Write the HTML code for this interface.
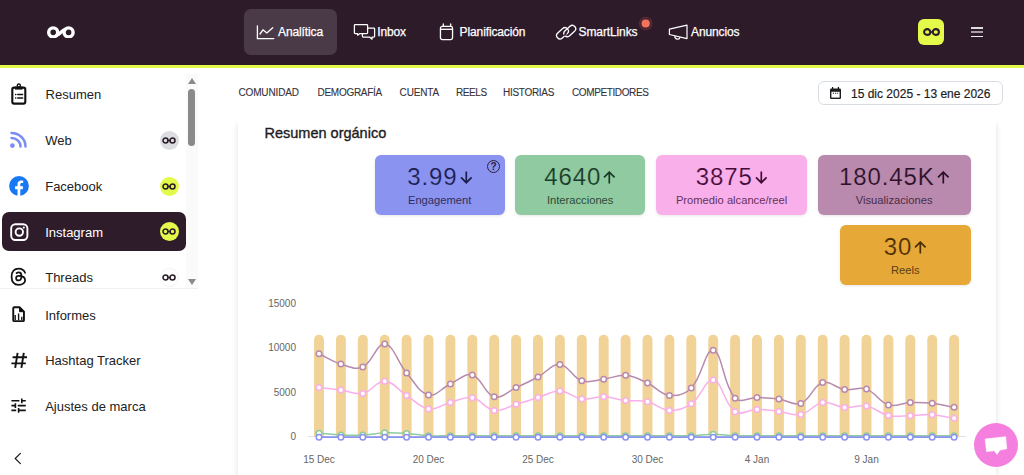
<!DOCTYPE html>
<html><head><meta charset="utf-8">
<style>
*{box-sizing:border-box;margin:0;padding:0}
html,body{width:1024px;height:475px;overflow:hidden;background:#fff;font-family:"Liberation Sans",sans-serif;color:#1d1d1f}
.abs{position:absolute}
</style></head><body>
<div class="abs" style="left:0;top:0;width:1024px;height:65px;background:#2e1b2a"></div>
<div class="abs" style="left:0;top:65px;width:1024px;height:3.3px;background:#e3fa4b"></div>
<svg style="position:absolute;left:46.8px;top:25.6px" width="28.60" height="12.80" viewBox="0 0 28.6 12.8"><circle cx="6.2" cy="6.4" r="4.5" fill="none" stroke="#ffffff" stroke-width="3.4"/><circle cx="21.6" cy="6.4" r="4.5" fill="none" stroke="#ffffff" stroke-width="3.4"/><path d="M8.8 9.8 L11.5 8.4 L16.3 4.4 L19 3" fill="none" stroke="#ffffff" stroke-width="3.4"/></svg>
<div class="abs" style="left:244px;top:9px;width:93px;height:46px;border-radius:7px;background:#4a3a47"></div>
<svg class="abs" style="left:256px;top:24px" width="19" height="16" viewBox="0 0 19 16"><path d="M1.4 1.9V14.6H17.8" fill="none" stroke="#fff" stroke-width="1.3" stroke-linecap="round"/><path d="M4 10 L7 5.8 L10.8 8.9 L16.7 3.8" fill="none" stroke="#fff" stroke-width="1.3" stroke-linecap="round" stroke-linejoin="round"/></svg>
<div style="position:absolute;top:23.84px;font-size:12px;line-height:16px;white-space:nowrap;left:278px;color:#fff;letter-spacing:-0.12px;-webkit-text-stroke:0.25px #fff">Analítica</div>
<svg class="abs" style="left:353px;top:23px" width="23" height="18" viewBox="0 0 23 18"><path d="M2.2 1.5H13.8A0.8 0.8 0 0 1 14.6 2.3V9.7A0.8 0.8 0 0 1 13.8 10.5H7L4.6 12.2V10.5H2.2A0.8 0.8 0 0 1 1.4 9.7V2.3A0.8 0.8 0 0 1 2.2 1.5Z" fill="none" stroke="#fff" stroke-width="1.25" stroke-linejoin="round"/><path d="M14.6 5H20.8A0.8 0.8 0 0 1 21.6 5.8V13.3A0.8 0.8 0 0 1 20.8 14.1H19V16.2L16.5 14.1H10.2A0.8 0.8 0 0 1 9.4 13.3V10.5" fill="none" stroke="#fff" stroke-width="1.25" stroke-linejoin="round"/></svg>
<div style="position:absolute;top:23.84px;font-size:12px;line-height:16px;white-space:nowrap;left:377.2px;color:#fff;letter-spacing:-0.12px;-webkit-text-stroke:0.25px #fff">Inbox</div>
<svg class="abs" style="left:439px;top:23px" width="17" height="18" viewBox="0 0 17 18"><rect x="1.45" y="3.45" width="12.1" height="13.1" rx="1.8" fill="none" stroke="#fff" stroke-width="1.3"/><path d="M1.6 6.3H13.4" stroke="#fff" stroke-width="1.3"/><path d="M4.3 0.9V3.2M11.7 0.9V3.2" stroke="#fff" stroke-width="1.3" stroke-linecap="round"/></svg>
<div style="position:absolute;top:23.84px;font-size:12px;line-height:16px;white-space:nowrap;left:459.6px;color:#fff;letter-spacing:-0.12px;-webkit-text-stroke:0.25px #fff">Planificación</div>
<svg class="abs" style="left:553px;top:22px" width="26" height="20" viewBox="0 0 26 20"><rect x="2.8" y="7.9" width="13.4" height="6.8" rx="3.4" transform="rotate(-42 9.5 11.3)" fill="none" stroke="#fff" stroke-width="1.3"/><rect x="10.1" y="5.6" width="13.4" height="6.8" rx="3.4" transform="rotate(-42 16.8 9)" fill="none" stroke="#fff" stroke-width="1.3"/><path d="M11.2 13.6L13.4 11.4" stroke="#2f1c2b" stroke-width="1.6"/><path d="M11.2 13.6L13.2 11.6" stroke="#fff" stroke-width="1.3" opacity="0"/></svg>
<div style="position:absolute;top:23.84px;font-size:12px;line-height:16px;white-space:nowrap;left:578.6px;color:#fff;letter-spacing:-0.12px;-webkit-text-stroke:0.25px #fff">SmartLinks</div>
<svg class="abs" style="left:636px;top:14px" width="20" height="20" viewBox="0 0 20 20"><circle cx="9.7" cy="9.5" r="6.8" fill="#5a2a35"/><circle cx="9.7" cy="9.5" r="5.6" fill="#4a2431"/><circle cx="9.7" cy="9.5" r="4.1" fill="#f4735c"/></svg>
<svg class="abs" style="left:664px;top:20px" width="30" height="24" viewBox="0 0 30 24"><path d="M5.4 9.2V14.5L23 18.6V5.1Z" fill="none" stroke="#fff" stroke-width="1.2" stroke-linejoin="round"/><path d="M11 15.9A2.6 2.6 0 0 0 16.1 17.1" fill="none" stroke="#fff" stroke-width="1.2"/></svg>
<div style="position:absolute;top:23.84px;font-size:12px;line-height:16px;white-space:nowrap;left:691px;color:#fff;letter-spacing:-0.12px;-webkit-text-stroke:0.25px #fff">Anuncios</div>
<div class="abs" style="left:918.4px;top:19.2px;width:25.7px;height:25.6px;border-radius:6px;background:#e3fa4b"></div>
<svg class="abs" style="left:922.5px;top:28px" width="17" height="8" viewBox="0 0 17 8"><ellipse cx="4.2" cy="4" rx="3.1" ry="2.9" fill="none" stroke="#2f1c2b" stroke-width="2.1"/><ellipse cx="12.8" cy="4" rx="3.1" ry="2.9" fill="none" stroke="#2f1c2b" stroke-width="2.1"/><path d="M7 4H10" stroke="#2f1c2b" stroke-width="1.6"/></svg>
<div class="abs" style="left:971px;top:27px;width:12px;height:1.5px;background:#dcdcdc"></div>
<div class="abs" style="left:971px;top:31.4px;width:12px;height:1.5px;background:#a49fa3"></div>
<div class="abs" style="left:971px;top:35.8px;width:12px;height:1.5px;background:#f0f0f0"></div>

<!-- sidebar -->
<div class="abs" style="left:186px;top:74px;width:12px;height:214px;background:#fafafa"></div>
<div class="abs" style="left:188.3px;top:89.2px;width:7px;height:57.3px;border-radius:3.5px;background:#8a8a8a"></div>
<svg class="abs" style="left:188px;top:78px" width="8" height="6"><path d="M0 6L4 0L8 6Z" fill="#8a8a8a"/></svg>
<svg class="abs" style="left:188px;top:279px" width="8" height="6"><path d="M0 0L4 6L8 0Z" fill="#8a8a8a"/></svg>
<div class="abs" style="left:0;top:288px;width:198px;height:1px;background:#edf0f3"></div>
<div class="abs" style="left:2px;top:212px;width:184px;height:39px;border-radius:7px;background:#2f1c2b"></div>

<svg class="abs" style="left:10px;top:83px" width="17" height="22" viewBox="0 0 17 22"><rect x="2.3" y="4.6" width="13" height="16" rx="1.8" fill="none" stroke="#111" stroke-width="2.1"/><path d="M5 3.6H12.6V6.6H5Z" fill="#111"/><circle cx="8.8" cy="2.6" r="1.6" fill="none" stroke="#111" stroke-width="1.3"/><path d="M5.6 11.6H5.8M5.6 15H5.8M7.8 11.6H12.6M7.8 15H12.6" stroke="#111" stroke-width="1.5" stroke-linecap="round"/></svg>
<div style="position:absolute;top:85.60px;font-size:13px;line-height:17px;white-space:nowrap;left:45.6px;color:#222">Resumen</div>
<svg class="abs" style="left:4px;top:126px" width="30" height="26" viewBox="0 0 30 26"><circle cx="8.4" cy="19.6" r="2.35" fill="#7b8df4"/><path d="M7.55 7.1A13.95 13.3 0 0 1 21.5 20.4M7.55 12.1A8.95 8.3 0 0 1 16.5 20.4" fill="none" stroke="#7b8df4" stroke-width="2.5" stroke-linecap="round"/></svg>
<div style="position:absolute;top:131.80px;font-size:13px;line-height:17px;white-space:nowrap;left:45.2px;color:#222">Web</div>
<div class="abs" style="left:159.8px;top:130.8px;width:19.2px;height:19.2px;border-radius:10px;background:#dcdde0"></div>
<svg style="position:absolute;left:162.4px;top:137.1px" width="15" height="7" viewBox="0 0 15 7"><circle cx="3.5" cy="3.5" r="2.5" fill="none" stroke="#2a1d28" stroke-width="1.55"/><circle cx="10.5" cy="3.5" r="2.5" fill="none" stroke="#2a1d28" stroke-width="1.55"/><path d="M5.6 3.5H8.4" stroke="#2a1d28" stroke-width="1.3"/></svg>
<svg class="abs" style="left:8.7px;top:175.5px" width="20" height="20" viewBox="0 0 20 20"><circle cx="10" cy="10" r="9.9" fill="#1877f2"/><path d="M11.3 20V13.2H13.7L14.1 10.3H11.3V8.5C11.3 7.7 11.6 7.1 12.8 7.1H14.2V4.6C13.9 4.5 13 4.4 12.1 4.4C10.1 4.4 8.5 5.6 8.5 7.9V10.3H6.1V13.2H8.5V20Z" fill="#fff"/></svg>
<div style="position:absolute;top:177.80px;font-size:13px;line-height:17px;white-space:nowrap;left:45.2px;color:#222">Facebook</div>
<div class="abs" style="left:159.8px;top:176.5px;width:19.2px;height:19.2px;border-radius:10px;background:#e3fa4b"></div>
<svg style="position:absolute;left:162.4px;top:182.8px" width="15" height="7" viewBox="0 0 15 7"><circle cx="3.5" cy="3.5" r="2.5" fill="none" stroke="#2a1d28" stroke-width="1.55"/><circle cx="10.5" cy="3.5" r="2.5" fill="none" stroke="#2a1d28" stroke-width="1.55"/><path d="M5.6 3.5H8.4" stroke="#2a1d28" stroke-width="1.3"/></svg>
<svg class="abs" style="left:9.5px;top:222.5px" width="19" height="18" viewBox="0 0 19 18"><rect x="1.2" y="1.2" width="16.2" height="15.8" rx="4.2" fill="none" stroke="#fff" stroke-width="1.9"/><circle cx="9.3" cy="9.1" r="3.7" fill="none" stroke="#fff" stroke-width="1.9"/><circle cx="13.8" cy="4.6" r="1.05" fill="#fff"/></svg>
<div style="position:absolute;top:223.80px;font-size:13px;line-height:17px;white-space:nowrap;left:45.2px;color:#fff">Instagram</div>
<div class="abs" style="left:159.8px;top:222px;width:19.2px;height:19.2px;border-radius:10px;background:#e3fa4b"></div>
<svg style="position:absolute;left:162.4px;top:228.3px" width="15" height="7" viewBox="0 0 15 7"><circle cx="3.5" cy="3.5" r="2.5" fill="none" stroke="#2a1d28" stroke-width="1.55"/><circle cx="10.5" cy="3.5" r="2.5" fill="none" stroke="#2a1d28" stroke-width="1.55"/><path d="M5.6 3.5H8.4" stroke="#2a1d28" stroke-width="1.3"/></svg>
<svg class="abs" style="left:7.95px;top:266.35px" width="21.6" height="21.6" viewBox="0 0 24 24"><path d="M19 7.5c-1.333 -3 -3.667 -4.5 -7 -4.5c-5 0 -8 2.5 -8 9s3.5 9 8 9s7 -3 7 -5s-1 -5 -7 -5c-2.5 0 -3 1.25 -3 2.5c0 1.5 1 2.5 2.5 2.5c2.5 0 3.5 -1.5 3.5 -5s-2 -4 -3 -4s-1.833 .333 -2.5 1" fill="none" stroke="#111" stroke-width="1.95" stroke-linecap="round" stroke-linejoin="round"/></svg>
<div style="position:absolute;top:269.40px;font-size:13px;line-height:17px;white-space:nowrap;left:45.2px;color:#222">Threads</div>
<div class="abs" style="left:159.8px;top:268px;width:19.4px;height:19.4px;border-radius:10px;background:#fff;border:1px solid #f3f3f3"></div>
<svg style="position:absolute;left:162.4px;top:274.3px" width="15" height="7" viewBox="0 0 15 7"><circle cx="3.5" cy="3.5" r="2.5" fill="none" stroke="#2a1d28" stroke-width="1.55"/><circle cx="10.5" cy="3.5" r="2.5" fill="none" stroke="#2a1d28" stroke-width="1.55"/><path d="M5.6 3.5H8.4" stroke="#2a1d28" stroke-width="1.3"/></svg>

<svg class="abs" style="left:5px;top:300px" width="30" height="30" viewBox="0 0 30 30"><path d="M9.25 7.25H14.5L18.95 11.7V20.15A1 1 0 0 1 17.95 21.15H9.25A1 1 0 0 1 8.25 20.15V8.25A1 1 0 0 1 9.25 7.25Z" fill="none" stroke="#111" stroke-width="1.9" stroke-linejoin="round"/><path d="M14.5 7.25L18.95 11.7H14.5Z" fill="#111" stroke="#111" stroke-width="1" stroke-linejoin="round"/><path d="M10.2 20V14.9M13.6 20V13.4M16.8 20V16.8" stroke="#111" stroke-width="1.35"/></svg>
<div style="position:absolute;top:306.50px;font-size:13px;line-height:17px;white-space:nowrap;left:45.2px;color:#222">Informes</div>
<svg class="abs" style="left:5px;top:345px" width="30" height="30" viewBox="0 0 30 30"><path d="M12.6 7.8L10.2 22.8M18.8 7.8L16.4 22.8M7.6 12.2H22M6.4 18.4H20.8" stroke="#111" stroke-width="1.9"/></svg>
<div style="position:absolute;top:352.20px;font-size:13px;line-height:17px;white-space:nowrap;left:45.2px;color:#222">Hashtag Tracker</div>
<svg class="abs" style="left:8.9px;top:396.3px" width="19.2" height="19.2" viewBox="0 0 24 24"><path d="M3 17v2h6v-2H3zM3 5v2h10V5H3zm10 16v-2h8v-2h-8v-2h-2v6h2zM7 9v2H3v2h4v2h2V9H7zm14 4v-2H11v2h10zm-6-4h2V7h4V5h-4V3h-2v6z" fill="#111"/></svg>
<div style="position:absolute;top:398.20px;font-size:13px;line-height:17px;white-space:nowrap;left:45.2px;color:#222">Ajustes de marca</div>
<svg class="abs" style="left:5px;top:445px" width="30" height="30" viewBox="0 0 30 30"><path d="M15.4 8.3L10.2 13.5L15.4 18.6" fill="none" stroke="#1a1a1a" stroke-width="1.2" stroke-linecap="round"/></svg>

<!-- tabs -->
<div style="position:absolute;top:86.03px;font-size:10px;line-height:13px;white-space:nowrap;left:238.4px;color:#35323a;letter-spacing:-0.12px;-webkit-text-stroke:0.1px #35323a">COMUNIDAD</div>
<div style="position:absolute;top:86.03px;font-size:10px;line-height:13px;white-space:nowrap;left:317.5px;color:#35323a;letter-spacing:-0.28px;-webkit-text-stroke:0.1px #35323a">DEMOGRAFÍA</div>
<div style="position:absolute;top:86.03px;font-size:10px;line-height:13px;white-space:nowrap;left:399.6px;color:#35323a;letter-spacing:-0.17px;-webkit-text-stroke:0.1px #35323a">CUENTA</div>
<div style="position:absolute;top:86.03px;font-size:10px;line-height:13px;white-space:nowrap;left:456px;color:#35323a;letter-spacing:-0.4px;-webkit-text-stroke:0.1px #35323a">REELS</div>
<div style="position:absolute;top:86.03px;font-size:10px;line-height:13px;white-space:nowrap;left:503px;color:#35323a;letter-spacing:-0.3px;-webkit-text-stroke:0.1px #35323a">HISTORIAS</div>
<div style="position:absolute;top:86.03px;font-size:10px;line-height:13px;white-space:nowrap;left:572px;color:#35323a;letter-spacing:-0.39px;-webkit-text-stroke:0.1px #35323a">COMPETIDORES</div>

<div class="abs" style="left:817.9px;top:81.4px;width:185px;height:24px;border:1px solid #d8dde3;border-radius:6px"></div>
<svg class="abs" style="left:828.6px;top:85.7px" width="13" height="14" viewBox="0 0 13 14"><rect x="1" y="2.5" width="11" height="10.5" rx="1.3" fill="#1d1d1f"/><rect x="2.4" y="5.8" width="8.2" height="5.8" fill="#fff"/><path d="M3.6 1V3.5M9.4 1V3.5" stroke="#1d1d1f" stroke-width="1.3"/><path d="M3.8 7.3H5M6 7.3H7.2M8.2 7.3H9.2" stroke="#1d1d1f" stroke-width="1.1"/></svg>
<div style="position:absolute;top:85.84px;font-size:12px;line-height:16px;white-space:nowrap;left:851px;color:#1d1d1f;-webkit-text-stroke:0.2px #1d1d1f">15 dic 2025 - 13 ene 2026</div>

<!-- card -->
<div class="abs" style="left:238.2px;top:118px;width:758.2px;height:400px;background:#fff;box-shadow:0 6px 6px rgba(0,0,0,.13)"></div>
<div style="position:absolute;top:123.98px;font-size:14.5px;line-height:19px;white-space:nowrap;left:264.5px;color:#1d1d1f;-webkit-text-stroke:0.35px #1d1d1f">Resumen orgánico</div>
<div class="abs" style="left:374.5px;top:155.2px;width:130.3px;height:60px;border-radius:6px;background:#8b93f0;box-shadow:0 1px 3px rgba(0,0,0,.1)"></div><div class="abs" style="left:374.5px;top:160.89999999999998px;width:130.3px;height:30px;display:flex;justify-content:center;align-items:center;color:#1c1f4e"><span style="font-size:24px;line-height:30px;letter-spacing:0.9px;position:relative;top:1px;-webkit-text-stroke:0.2px #8b93f0">3.99</span><svg style="margin-left:2px;margin-top:2.6px" width="12.6" height="12.8" viewBox="0 0 12.6 12.8"><path d="M6.3 0.4V11.7M1 6.4L6.3 11.7L11.6 6.4" fill="none" stroke="#1c1f4e" stroke-width="1.7"/></svg></div><div style="position:absolute;top:192.62px;font-size:11.2px;line-height:15px;white-space:nowrap;left:374.5px;width:130.3px;text-align:center;color:#2c2f60">Engagement</div><div class="abs" style="left:515px;top:155.2px;width:130.3px;height:60px;border-radius:6px;background:#8fcaa0;box-shadow:0 1px 3px rgba(0,0,0,.1)"></div><div class="abs" style="left:515px;top:160.89999999999998px;width:130.3px;height:30px;display:flex;justify-content:center;align-items:center;color:#1b3a28"><span style="font-size:24px;line-height:30px;letter-spacing:0.9px;position:relative;top:1px;-webkit-text-stroke:0.2px #8fcaa0">4640</span><svg style="margin-left:2px;margin-top:2.6px" width="12.6" height="12.8" viewBox="0 0 12.6 12.8"><path d="M6.3 12.4V1.1M1 6.4L6.3 1.1L11.6 6.4" fill="none" stroke="#1b3a28" stroke-width="1.7"/></svg></div><div style="position:absolute;top:192.62px;font-size:11.2px;line-height:15px;white-space:nowrap;left:515.0px;width:130.3px;text-align:center;color:#2d4a37">Interacciones</div><div class="abs" style="left:655.8px;top:155.2px;width:151.5px;height:60px;border-radius:6px;background:#f9b0ea;box-shadow:0 1px 3px rgba(0,0,0,.1)"></div><div class="abs" style="left:655.8px;top:160.89999999999998px;width:151.5px;height:30px;display:flex;justify-content:center;align-items:center;color:#420c36"><span style="font-size:24px;line-height:30px;letter-spacing:0.9px;position:relative;top:1px;-webkit-text-stroke:0.2px #f9b0ea">3875</span><svg style="margin-left:2px;margin-top:2.6px" width="12.6" height="12.8" viewBox="0 0 12.6 12.8"><path d="M6.3 0.4V11.7M1 6.4L6.3 11.7L11.6 6.4" fill="none" stroke="#420c36" stroke-width="1.7"/></svg></div><div style="position:absolute;top:192.62px;font-size:11.2px;line-height:15px;white-space:nowrap;left:655.8px;width:151.5px;text-align:center;color:#66305a">Promedio alcance/reel</div><div class="abs" style="left:817.6px;top:155.2px;width:153.1px;height:60px;border-radius:6px;background:#b98aae;box-shadow:0 1px 3px rgba(0,0,0,.1)"></div><div class="abs" style="left:817.6px;top:160.89999999999998px;width:153.1px;height:30px;display:flex;justify-content:center;align-items:center;color:#2c1128"><span style="font-size:24px;line-height:30px;letter-spacing:0.9px;position:relative;top:1px;-webkit-text-stroke:0.2px #b98aae">180.45K</span><svg style="margin-left:2px;margin-top:2.6px" width="12.6" height="12.8" viewBox="0 0 12.6 12.8"><path d="M6.3 12.4V1.1M1 6.4L6.3 1.1L11.6 6.4" fill="none" stroke="#2c1128" stroke-width="1.7"/></svg></div><div style="position:absolute;top:192.62px;font-size:11.2px;line-height:15px;white-space:nowrap;left:817.6px;width:153.1px;text-align:center;color:#4a2c44">Visualizaciones</div><div class="abs" style="left:840px;top:225.2px;width:130.7px;height:60px;border-radius:6px;background:#e6a837;box-shadow:0 1px 3px rgba(0,0,0,.1)"></div><div class="abs" style="left:840px;top:230.89999999999998px;width:130.7px;height:30px;display:flex;justify-content:center;align-items:center;color:#4a2e05"><span style="font-size:24px;line-height:30px;letter-spacing:0.9px;position:relative;top:1px;-webkit-text-stroke:0.2px #e6a837">30</span><svg style="margin-left:2px;margin-top:2.6px" width="12.6" height="12.8" viewBox="0 0 12.6 12.8"><path d="M6.3 12.4V1.1M1 6.4L6.3 1.1L11.6 6.4" fill="none" stroke="#4a2e05" stroke-width="1.7"/></svg></div><div style="position:absolute;top:262.62px;font-size:11.2px;line-height:15px;white-space:nowrap;left:840.0px;width:130.7px;text-align:center;color:#5c3f14">Reels</div><div class="abs" style="left:487px;top:159.6px;width:13.2px;height:13.2px;border:1.1px solid #2a2140;border-radius:7px"></div>
<div style="position:absolute;top:159.84px;font-size:10px;line-height:13px;white-space:nowrap;left:486.5px;width:14px;text-align:center;color:#2a2140;font-weight:bold">?</div>
<div style="position:absolute;top:297.14px;font-size:10px;line-height:13px;white-space:nowrap;left:236px;width:60px;text-align:right;color:#666">15000</div><div style="position:absolute;top:341.44px;font-size:10px;line-height:13px;white-space:nowrap;left:236px;width:60px;text-align:right;color:#666">10000</div><div style="position:absolute;top:385.84px;font-size:10px;line-height:13px;white-space:nowrap;left:236px;width:60px;text-align:right;color:#666">5000</div><div style="position:absolute;top:430.14px;font-size:10px;line-height:13px;white-space:nowrap;left:236px;width:60px;text-align:right;color:#666">0</div>
<div style="position:absolute;top:452.74px;font-size:10px;line-height:13px;white-space:nowrap;left:279.0px;width:80px;text-align:center;color:#666">15 Dec</div><div style="position:absolute;top:452.74px;font-size:10px;line-height:13px;white-space:nowrap;left:388.5px;width:80px;text-align:center;color:#666">20 Dec</div><div style="position:absolute;top:452.74px;font-size:10px;line-height:13px;white-space:nowrap;left:498.0px;width:80px;text-align:center;color:#666">25 Dec</div><div style="position:absolute;top:452.74px;font-size:10px;line-height:13px;white-space:nowrap;left:607.5px;width:80px;text-align:center;color:#666">30 Dec</div><div style="position:absolute;top:452.74px;font-size:10px;line-height:13px;white-space:nowrap;left:717.0px;width:80px;text-align:center;color:#666">4 Jan</div><div style="position:absolute;top:452.74px;font-size:10px;line-height:13px;white-space:nowrap;left:826.5px;width:80px;text-align:center;color:#666">9 Jan</div>
<svg style="position:absolute;left:0;top:0" width="1024" height="475" viewBox="0 0 1024 475">
<line x1="308" y1="436.5" x2="966" y2="436.5" stroke="#e3e3e3" stroke-width="1"/>
<path d="M314.05 436.5V339.65A4.95 4.95 0 0 1 323.95 339.65V436.5Z" fill="#f1d297"/><path d="M335.95 436.5V339.65A4.95 4.95 0 0 1 345.85 339.65V436.5Z" fill="#f1d297"/><path d="M357.85 436.5V339.65A4.95 4.95 0 0 1 367.75 339.65V436.5Z" fill="#f1d297"/><path d="M379.75 436.5V339.65A4.95 4.95 0 0 1 389.65 339.65V436.5Z" fill="#f1d297"/><path d="M401.65 436.5V339.65A4.95 4.95 0 0 1 411.55 339.65V436.5Z" fill="#f1d297"/><path d="M423.55 436.5V339.65A4.95 4.95 0 0 1 433.45 339.65V436.5Z" fill="#f1d297"/><path d="M445.45 436.5V339.65A4.95 4.95 0 0 1 455.35 339.65V436.5Z" fill="#f1d297"/><path d="M467.35 436.5V339.65A4.95 4.95 0 0 1 477.25 339.65V436.5Z" fill="#f1d297"/><path d="M489.25 436.5V339.65A4.95 4.95 0 0 1 499.15 339.65V436.5Z" fill="#f1d297"/><path d="M511.15 436.5V339.65A4.95 4.95 0 0 1 521.05 339.65V436.5Z" fill="#f1d297"/><path d="M533.05 436.5V339.65A4.95 4.95 0 0 1 542.95 339.65V436.5Z" fill="#f1d297"/><path d="M554.95 436.5V339.65A4.95 4.95 0 0 1 564.85 339.65V436.5Z" fill="#f1d297"/><path d="M576.85 436.5V339.65A4.95 4.95 0 0 1 586.75 339.65V436.5Z" fill="#f1d297"/><path d="M598.75 436.5V339.65A4.95 4.95 0 0 1 608.65 339.65V436.5Z" fill="#f1d297"/><path d="M620.65 436.5V339.65A4.95 4.95 0 0 1 630.55 339.65V436.5Z" fill="#f1d297"/><path d="M642.55 436.5V339.65A4.95 4.95 0 0 1 652.45 339.65V436.5Z" fill="#f1d297"/><path d="M664.45 436.5V339.65A4.95 4.95 0 0 1 674.35 339.65V436.5Z" fill="#f1d297"/><path d="M686.35 436.5V339.65A4.95 4.95 0 0 1 696.25 339.65V436.5Z" fill="#f1d297"/><path d="M708.25 436.5V339.65A4.95 4.95 0 0 1 718.15 339.65V436.5Z" fill="#f1d297"/><path d="M730.15 436.5V339.65A4.95 4.95 0 0 1 740.05 339.65V436.5Z" fill="#f1d297"/><path d="M752.05 436.5V339.65A4.95 4.95 0 0 1 761.95 339.65V436.5Z" fill="#f1d297"/><path d="M773.95 436.5V339.65A4.95 4.95 0 0 1 783.85 339.65V436.5Z" fill="#f1d297"/><path d="M795.85 436.5V339.65A4.95 4.95 0 0 1 805.75 339.65V436.5Z" fill="#f1d297"/><path d="M817.75 436.5V339.65A4.95 4.95 0 0 1 827.65 339.65V436.5Z" fill="#f1d297"/><path d="M839.65 436.5V339.65A4.95 4.95 0 0 1 849.55 339.65V436.5Z" fill="#f1d297"/><path d="M861.55 436.5V339.65A4.95 4.95 0 0 1 871.45 339.65V436.5Z" fill="#f1d297"/><path d="M883.45 436.5V339.65A4.95 4.95 0 0 1 893.35 339.65V436.5Z" fill="#f1d297"/><path d="M905.35 436.5V339.65A4.95 4.95 0 0 1 915.25 339.65V436.5Z" fill="#f1d297"/><path d="M927.25 436.5V339.65A4.95 4.95 0 0 1 937.15 339.65V436.5Z" fill="#f1d297"/><path d="M949.15 436.5V339.65A4.95 4.95 0 0 1 959.05 339.65V436.5Z" fill="#f1d297"/>
<path d="M319.0 353.7C327.8 357.9 331.7 361.3 340.9 364.1C349.3 366.6 355.6 370.3 362.8 367.0C373.1 362.3 376.5 342.9 384.7 344.0C394.0 345.3 397.2 361.9 406.6 372.9C414.7 382.3 418.7 392.4 428.5 394.9C436.2 396.9 441.5 388.0 450.4 384.0C459.0 380.1 464.7 372.8 472.3 375.0C482.2 377.9 484.3 394.0 494.2 396.8C501.8 399.0 507.4 391.5 516.1 387.6C525.0 383.6 529.4 381.6 538.0 377.0C546.9 372.3 551.5 363.7 559.9 364.4C569.0 365.2 572.1 377.5 581.8 380.8C589.6 383.4 595.0 380.3 603.7 379.2C612.5 378.1 617.0 374.6 625.6 375.3C634.5 376.1 639.1 379.1 647.5 383.0C656.6 387.2 660.3 394.4 669.4 395.4C677.8 396.3 685.2 394.2 691.3 387.9C702.7 376.1 705.3 348.4 713.2 350.3C722.8 352.6 722.7 384.9 735.1 398.3C740.2 403.9 748.2 397.5 757.0 397.6C765.8 397.7 770.2 397.9 778.9 399.0C787.7 400.2 793.4 406.2 800.8 403.4C810.9 399.6 812.7 385.6 822.7 382.5C830.3 380.1 835.6 388.2 844.6 389.6C853.1 390.9 858.7 386.4 866.5 389.1C876.2 392.5 878.7 401.9 888.4 404.9C896.3 407.3 901.5 402.9 910.3 402.6C919.0 402.3 923.5 402.4 932.2 403.3C941.0 404.2 945.3 405.6 954.1 407.2" fill="none" stroke="#b88aae" stroke-width="1.5"/>
<circle cx="319.0" cy="353.7" r="2.75" fill="#fff" stroke="#b88aae" stroke-width="1.5"/><circle cx="340.9" cy="364.1" r="2.75" fill="#fff" stroke="#b88aae" stroke-width="1.5"/><circle cx="362.8" cy="367.0" r="2.75" fill="#fff" stroke="#b88aae" stroke-width="1.5"/><circle cx="384.7" cy="344.0" r="2.75" fill="#fff" stroke="#b88aae" stroke-width="1.5"/><circle cx="406.6" cy="372.9" r="2.75" fill="#fff" stroke="#b88aae" stroke-width="1.5"/><circle cx="428.5" cy="394.9" r="2.75" fill="#fff" stroke="#b88aae" stroke-width="1.5"/><circle cx="450.4" cy="384.0" r="2.75" fill="#fff" stroke="#b88aae" stroke-width="1.5"/><circle cx="472.3" cy="375.0" r="2.75" fill="#fff" stroke="#b88aae" stroke-width="1.5"/><circle cx="494.2" cy="396.8" r="2.75" fill="#fff" stroke="#b88aae" stroke-width="1.5"/><circle cx="516.1" cy="387.6" r="2.75" fill="#fff" stroke="#b88aae" stroke-width="1.5"/><circle cx="538.0" cy="377.0" r="2.75" fill="#fff" stroke="#b88aae" stroke-width="1.5"/><circle cx="559.9" cy="364.4" r="2.75" fill="#fff" stroke="#b88aae" stroke-width="1.5"/><circle cx="581.8" cy="380.8" r="2.75" fill="#fff" stroke="#b88aae" stroke-width="1.5"/><circle cx="603.7" cy="379.2" r="2.75" fill="#fff" stroke="#b88aae" stroke-width="1.5"/><circle cx="625.6" cy="375.3" r="2.75" fill="#fff" stroke="#b88aae" stroke-width="1.5"/><circle cx="647.5" cy="383.0" r="2.75" fill="#fff" stroke="#b88aae" stroke-width="1.5"/><circle cx="669.4" cy="395.4" r="2.75" fill="#fff" stroke="#b88aae" stroke-width="1.5"/><circle cx="691.3" cy="387.9" r="2.75" fill="#fff" stroke="#b88aae" stroke-width="1.5"/><circle cx="713.2" cy="350.3" r="2.75" fill="#fff" stroke="#b88aae" stroke-width="1.5"/><circle cx="735.1" cy="398.3" r="2.75" fill="#fff" stroke="#b88aae" stroke-width="1.5"/><circle cx="757.0" cy="397.6" r="2.75" fill="#fff" stroke="#b88aae" stroke-width="1.5"/><circle cx="778.9" cy="399.0" r="2.75" fill="#fff" stroke="#b88aae" stroke-width="1.5"/><circle cx="800.8" cy="403.4" r="2.75" fill="#fff" stroke="#b88aae" stroke-width="1.5"/><circle cx="822.7" cy="382.5" r="2.75" fill="#fff" stroke="#b88aae" stroke-width="1.5"/><circle cx="844.6" cy="389.6" r="2.75" fill="#fff" stroke="#b88aae" stroke-width="1.5"/><circle cx="866.5" cy="389.1" r="2.75" fill="#fff" stroke="#b88aae" stroke-width="1.5"/><circle cx="888.4" cy="404.9" r="2.75" fill="#fff" stroke="#b88aae" stroke-width="1.5"/><circle cx="910.3" cy="402.6" r="2.75" fill="#fff" stroke="#b88aae" stroke-width="1.5"/><circle cx="932.2" cy="403.3" r="2.75" fill="#fff" stroke="#b88aae" stroke-width="1.5"/><circle cx="954.1" cy="407.2" r="2.75" fill="#fff" stroke="#b88aae" stroke-width="1.5"/>
<path d="M319.0 387.6C327.8 388.6 332.2 388.8 340.9 390.0C349.7 391.2 354.6 395.0 362.8 393.4C372.1 391.6 376.1 380.9 384.7 381.3C393.6 381.7 397.8 389.8 406.6 395.4C415.3 400.9 419.2 407.4 428.5 408.9C436.7 410.2 441.5 404.6 450.4 402.4C459.1 400.2 464.1 396.3 472.3 397.8C481.6 399.5 485.0 409.0 494.2 410.4C502.5 411.6 507.4 406.9 516.1 404.3C524.9 401.7 529.2 400.3 538.0 397.6C546.8 394.9 551.2 390.7 559.9 391.0C568.7 391.3 572.8 397.8 581.8 399.0C590.3 400.1 595.0 396.5 603.7 396.8C612.5 397.1 616.8 399.5 625.6 400.5C634.3 401.5 639.1 399.8 647.5 401.7C656.6 403.8 660.5 410.0 669.4 410.4C678.0 410.8 684.0 408.8 691.3 403.8C701.6 396.7 705.2 378.6 713.2 380.1C722.7 381.8 724.0 404.3 735.1 411.8C741.5 416.1 748.2 409.5 757.0 409.4C765.8 409.3 770.2 410.4 778.9 411.4C787.7 412.4 792.6 416.2 800.8 414.5C810.1 412.6 813.5 404.1 822.7 402.6C831.0 401.3 835.7 406.8 844.6 407.5C853.3 408.2 858.1 404.5 866.5 406.0C875.6 407.7 879.3 413.5 888.4 415.5C896.8 417.4 901.5 415.9 910.3 415.7C919.1 415.5 923.5 414.2 932.2 414.7C941.0 415.2 945.3 416.9 954.1 418.3" fill="none" stroke="#f9b0ea" stroke-width="1.5"/>
<circle cx="319.0" cy="387.6" r="2.75" fill="#fff" stroke="#f9b0ea" stroke-width="1.5"/><circle cx="340.9" cy="390.0" r="2.75" fill="#fff" stroke="#f9b0ea" stroke-width="1.5"/><circle cx="362.8" cy="393.4" r="2.75" fill="#fff" stroke="#f9b0ea" stroke-width="1.5"/><circle cx="384.7" cy="381.3" r="2.75" fill="#fff" stroke="#f9b0ea" stroke-width="1.5"/><circle cx="406.6" cy="395.4" r="2.75" fill="#fff" stroke="#f9b0ea" stroke-width="1.5"/><circle cx="428.5" cy="408.9" r="2.75" fill="#fff" stroke="#f9b0ea" stroke-width="1.5"/><circle cx="450.4" cy="402.4" r="2.75" fill="#fff" stroke="#f9b0ea" stroke-width="1.5"/><circle cx="472.3" cy="397.8" r="2.75" fill="#fff" stroke="#f9b0ea" stroke-width="1.5"/><circle cx="494.2" cy="410.4" r="2.75" fill="#fff" stroke="#f9b0ea" stroke-width="1.5"/><circle cx="516.1" cy="404.3" r="2.75" fill="#fff" stroke="#f9b0ea" stroke-width="1.5"/><circle cx="538.0" cy="397.6" r="2.75" fill="#fff" stroke="#f9b0ea" stroke-width="1.5"/><circle cx="559.9" cy="391.0" r="2.75" fill="#fff" stroke="#f9b0ea" stroke-width="1.5"/><circle cx="581.8" cy="399.0" r="2.75" fill="#fff" stroke="#f9b0ea" stroke-width="1.5"/><circle cx="603.7" cy="396.8" r="2.75" fill="#fff" stroke="#f9b0ea" stroke-width="1.5"/><circle cx="625.6" cy="400.5" r="2.75" fill="#fff" stroke="#f9b0ea" stroke-width="1.5"/><circle cx="647.5" cy="401.7" r="2.75" fill="#fff" stroke="#f9b0ea" stroke-width="1.5"/><circle cx="669.4" cy="410.4" r="2.75" fill="#fff" stroke="#f9b0ea" stroke-width="1.5"/><circle cx="691.3" cy="403.8" r="2.75" fill="#fff" stroke="#f9b0ea" stroke-width="1.5"/><circle cx="713.2" cy="380.1" r="2.75" fill="#fff" stroke="#f9b0ea" stroke-width="1.5"/><circle cx="735.1" cy="411.8" r="2.75" fill="#fff" stroke="#f9b0ea" stroke-width="1.5"/><circle cx="757.0" cy="409.4" r="2.75" fill="#fff" stroke="#f9b0ea" stroke-width="1.5"/><circle cx="778.9" cy="411.4" r="2.75" fill="#fff" stroke="#f9b0ea" stroke-width="1.5"/><circle cx="800.8" cy="414.5" r="2.75" fill="#fff" stroke="#f9b0ea" stroke-width="1.5"/><circle cx="822.7" cy="402.6" r="2.75" fill="#fff" stroke="#f9b0ea" stroke-width="1.5"/><circle cx="844.6" cy="407.5" r="2.75" fill="#fff" stroke="#f9b0ea" stroke-width="1.5"/><circle cx="866.5" cy="406.0" r="2.75" fill="#fff" stroke="#f9b0ea" stroke-width="1.5"/><circle cx="888.4" cy="415.5" r="2.75" fill="#fff" stroke="#f9b0ea" stroke-width="1.5"/><circle cx="910.3" cy="415.7" r="2.75" fill="#fff" stroke="#f9b0ea" stroke-width="1.5"/><circle cx="932.2" cy="414.7" r="2.75" fill="#fff" stroke="#f9b0ea" stroke-width="1.5"/><circle cx="954.1" cy="418.3" r="2.75" fill="#fff" stroke="#f9b0ea" stroke-width="1.5"/>
<path d="M319.0 433.2C327.8 433.9 332.1 434.5 340.9 434.9C349.6 435.3 354.1 435.5 362.8 435.1C371.6 434.7 375.9 433.0 384.7 432.7C393.4 432.4 397.9 432.8 406.6 433.4C415.4 434.0 419.7 435.2 428.5 435.7C437.2 436.2 441.6 435.7 450.4 435.7C459.2 435.7 463.5 435.7 472.3 435.7C481.1 435.7 485.4 435.7 494.2 435.7C503.0 435.7 507.3 435.7 516.1 435.7C524.9 435.7 529.2 435.7 538.0 435.7C546.8 435.7 551.1 435.7 559.9 435.7C568.7 435.7 573.0 435.7 581.8 435.7C590.6 435.7 594.9 435.7 603.7 435.7C612.5 435.7 616.8 435.7 625.6 435.7C634.4 435.7 638.7 435.7 647.5 435.7C656.3 435.7 660.6 435.7 669.4 435.7C678.2 435.7 682.5 436.0 691.3 435.7C700.1 435.4 704.4 434.3 713.2 434.3C722.0 434.3 726.3 435.4 735.1 435.7C743.9 436.0 748.2 435.7 757.0 435.7C765.8 435.7 770.1 435.7 778.9 435.7C787.7 435.7 792.0 435.7 800.8 435.7C809.6 435.7 813.9 435.7 822.7 435.7C831.5 435.7 835.8 435.7 844.6 435.7C853.4 435.7 857.7 435.7 866.5 435.7C875.3 435.7 879.6 435.7 888.4 435.7C897.2 435.7 901.5 435.7 910.3 435.7C919.1 435.7 923.4 435.7 932.2 435.7C941.0 435.7 945.3 435.7 954.1 435.7" fill="none" stroke="#8fcaa0" stroke-width="1.5"/>
<circle cx="319.0" cy="433.2" r="2.75" fill="#fff" stroke="#8fcaa0" stroke-width="1.5"/><circle cx="340.9" cy="434.9" r="2.75" fill="#fff" stroke="#8fcaa0" stroke-width="1.5"/><circle cx="362.8" cy="435.1" r="2.75" fill="#fff" stroke="#8fcaa0" stroke-width="1.5"/><circle cx="384.7" cy="432.7" r="2.75" fill="#fff" stroke="#8fcaa0" stroke-width="1.5"/><circle cx="406.6" cy="433.4" r="2.75" fill="#fff" stroke="#8fcaa0" stroke-width="1.5"/><circle cx="428.5" cy="435.7" r="2.75" fill="#fff" stroke="#8fcaa0" stroke-width="1.5"/><circle cx="450.4" cy="435.7" r="2.75" fill="#fff" stroke="#8fcaa0" stroke-width="1.5"/><circle cx="472.3" cy="435.7" r="2.75" fill="#fff" stroke="#8fcaa0" stroke-width="1.5"/><circle cx="494.2" cy="435.7" r="2.75" fill="#fff" stroke="#8fcaa0" stroke-width="1.5"/><circle cx="516.1" cy="435.7" r="2.75" fill="#fff" stroke="#8fcaa0" stroke-width="1.5"/><circle cx="538.0" cy="435.7" r="2.75" fill="#fff" stroke="#8fcaa0" stroke-width="1.5"/><circle cx="559.9" cy="435.7" r="2.75" fill="#fff" stroke="#8fcaa0" stroke-width="1.5"/><circle cx="581.8" cy="435.7" r="2.75" fill="#fff" stroke="#8fcaa0" stroke-width="1.5"/><circle cx="603.7" cy="435.7" r="2.75" fill="#fff" stroke="#8fcaa0" stroke-width="1.5"/><circle cx="625.6" cy="435.7" r="2.75" fill="#fff" stroke="#8fcaa0" stroke-width="1.5"/><circle cx="647.5" cy="435.7" r="2.75" fill="#fff" stroke="#8fcaa0" stroke-width="1.5"/><circle cx="669.4" cy="435.7" r="2.75" fill="#fff" stroke="#8fcaa0" stroke-width="1.5"/><circle cx="691.3" cy="435.7" r="2.75" fill="#fff" stroke="#8fcaa0" stroke-width="1.5"/><circle cx="713.2" cy="434.3" r="2.75" fill="#fff" stroke="#8fcaa0" stroke-width="1.5"/><circle cx="735.1" cy="435.7" r="2.75" fill="#fff" stroke="#8fcaa0" stroke-width="1.5"/><circle cx="757.0" cy="435.7" r="2.75" fill="#fff" stroke="#8fcaa0" stroke-width="1.5"/><circle cx="778.9" cy="435.7" r="2.75" fill="#fff" stroke="#8fcaa0" stroke-width="1.5"/><circle cx="800.8" cy="435.7" r="2.75" fill="#fff" stroke="#8fcaa0" stroke-width="1.5"/><circle cx="822.7" cy="435.7" r="2.75" fill="#fff" stroke="#8fcaa0" stroke-width="1.5"/><circle cx="844.6" cy="435.7" r="2.75" fill="#fff" stroke="#8fcaa0" stroke-width="1.5"/><circle cx="866.5" cy="435.7" r="2.75" fill="#fff" stroke="#8fcaa0" stroke-width="1.5"/><circle cx="888.4" cy="435.7" r="2.75" fill="#fff" stroke="#8fcaa0" stroke-width="1.5"/><circle cx="910.3" cy="435.7" r="2.75" fill="#fff" stroke="#8fcaa0" stroke-width="1.5"/><circle cx="932.2" cy="435.7" r="2.75" fill="#fff" stroke="#8fcaa0" stroke-width="1.5"/><circle cx="954.1" cy="435.7" r="2.75" fill="#fff" stroke="#8fcaa0" stroke-width="1.5"/>
<path d="M319.0 437.2C327.8 437.2 332.1 437.2 340.9 437.2C349.7 437.2 354.0 437.2 362.8 437.2C371.6 437.2 375.9 437.2 384.7 437.2C393.5 437.2 397.8 437.2 406.6 437.2C415.4 437.2 419.7 437.2 428.5 437.2C437.3 437.2 441.6 437.2 450.4 437.2C459.2 437.2 463.5 437.2 472.3 437.2C481.1 437.2 485.4 437.2 494.2 437.2C503.0 437.2 507.3 437.2 516.1 437.2C524.9 437.2 529.2 437.2 538.0 437.2C546.8 437.2 551.1 437.2 559.9 437.2C568.7 437.2 573.0 437.2 581.8 437.2C590.6 437.2 594.9 437.2 603.7 437.2C612.5 437.2 616.8 437.2 625.6 437.2C634.4 437.2 638.7 437.2 647.5 437.2C656.3 437.2 660.6 437.2 669.4 437.2C678.2 437.2 682.5 437.2 691.3 437.2C700.1 437.2 704.4 437.2 713.2 437.2C722.0 437.2 726.3 437.2 735.1 437.2C743.9 437.2 748.2 437.2 757.0 437.2C765.8 437.2 770.1 437.2 778.9 437.2C787.7 437.2 792.0 437.2 800.8 437.2C809.6 437.2 813.9 437.2 822.7 437.2C831.5 437.2 835.8 437.2 844.6 437.2C853.4 437.2 857.7 437.2 866.5 437.2C875.3 437.2 879.6 437.2 888.4 437.2C897.2 437.2 901.5 437.2 910.3 437.2C919.1 437.2 923.4 437.2 932.2 437.2C941.0 437.2 945.3 437.2 954.1 437.2" fill="none" stroke="#8b93f0" stroke-width="1.8"/>
<circle cx="319.0" cy="437.2" r="2.75" fill="#fff" stroke="#8b93f0" stroke-width="1.5"/><circle cx="340.9" cy="437.2" r="2.75" fill="#fff" stroke="#8b93f0" stroke-width="1.5"/><circle cx="362.8" cy="437.2" r="2.75" fill="#fff" stroke="#8b93f0" stroke-width="1.5"/><circle cx="384.7" cy="437.2" r="2.75" fill="#fff" stroke="#8b93f0" stroke-width="1.5"/><circle cx="406.6" cy="437.2" r="2.75" fill="#fff" stroke="#8b93f0" stroke-width="1.5"/><circle cx="428.5" cy="437.2" r="2.75" fill="#fff" stroke="#8b93f0" stroke-width="1.5"/><circle cx="450.4" cy="437.2" r="2.75" fill="#fff" stroke="#8b93f0" stroke-width="1.5"/><circle cx="472.3" cy="437.2" r="2.75" fill="#fff" stroke="#8b93f0" stroke-width="1.5"/><circle cx="494.2" cy="437.2" r="2.75" fill="#fff" stroke="#8b93f0" stroke-width="1.5"/><circle cx="516.1" cy="437.2" r="2.75" fill="#fff" stroke="#8b93f0" stroke-width="1.5"/><circle cx="538.0" cy="437.2" r="2.75" fill="#fff" stroke="#8b93f0" stroke-width="1.5"/><circle cx="559.9" cy="437.2" r="2.75" fill="#fff" stroke="#8b93f0" stroke-width="1.5"/><circle cx="581.8" cy="437.2" r="2.75" fill="#fff" stroke="#8b93f0" stroke-width="1.5"/><circle cx="603.7" cy="437.2" r="2.75" fill="#fff" stroke="#8b93f0" stroke-width="1.5"/><circle cx="625.6" cy="437.2" r="2.75" fill="#fff" stroke="#8b93f0" stroke-width="1.5"/><circle cx="647.5" cy="437.2" r="2.75" fill="#fff" stroke="#8b93f0" stroke-width="1.5"/><circle cx="669.4" cy="437.2" r="2.75" fill="#fff" stroke="#8b93f0" stroke-width="1.5"/><circle cx="691.3" cy="437.2" r="2.75" fill="#fff" stroke="#8b93f0" stroke-width="1.5"/><circle cx="713.2" cy="437.2" r="2.75" fill="#fff" stroke="#8b93f0" stroke-width="1.5"/><circle cx="735.1" cy="437.2" r="2.75" fill="#fff" stroke="#8b93f0" stroke-width="1.5"/><circle cx="757.0" cy="437.2" r="2.75" fill="#fff" stroke="#8b93f0" stroke-width="1.5"/><circle cx="778.9" cy="437.2" r="2.75" fill="#fff" stroke="#8b93f0" stroke-width="1.5"/><circle cx="800.8" cy="437.2" r="2.75" fill="#fff" stroke="#8b93f0" stroke-width="1.5"/><circle cx="822.7" cy="437.2" r="2.75" fill="#fff" stroke="#8b93f0" stroke-width="1.5"/><circle cx="844.6" cy="437.2" r="2.75" fill="#fff" stroke="#8b93f0" stroke-width="1.5"/><circle cx="866.5" cy="437.2" r="2.75" fill="#fff" stroke="#8b93f0" stroke-width="1.5"/><circle cx="888.4" cy="437.2" r="2.75" fill="#fff" stroke="#8b93f0" stroke-width="1.5"/><circle cx="910.3" cy="437.2" r="2.75" fill="#fff" stroke="#8b93f0" stroke-width="1.5"/><circle cx="932.2" cy="437.2" r="2.75" fill="#fff" stroke="#8b93f0" stroke-width="1.5"/><circle cx="954.1" cy="437.2" r="2.75" fill="#fff" stroke="#8b93f0" stroke-width="1.5"/>
</svg>
<div class="abs" style="left:974px;top:422.7px;width:44px;height:44px;border-radius:22px;background:#f47fdf"></div>
<svg class="abs" style="left:964px;top:415px" width="60" height="60" viewBox="0 0 60 60"><path d="M21.2 24L41.7 21.7L42.7 33.8L36 35.1L33 39.4L30.3 35.8L22.5 36.6Z" fill="#fff" stroke="#fff" stroke-width="0.6" stroke-linejoin="round"/></svg>
</body></html>
